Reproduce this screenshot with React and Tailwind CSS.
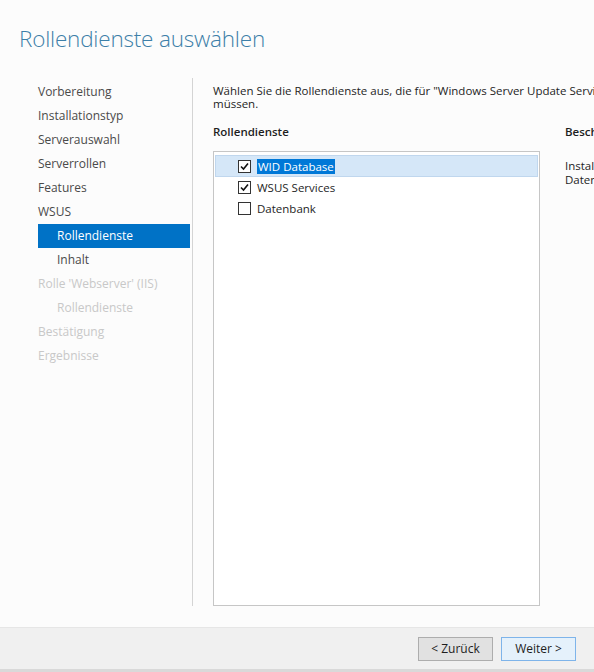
import React from "react";

const font = { fontFamily: '"Open Sans", "Noto Sans", sans-serif' };

function Check({ checked }) {
  return (
    <span className="w-[13px] h-[13px] border border-[#333] bg-white flex items-center justify-center shrink-0">
      {checked && (
        <svg width="9" height="9" viewBox="0 0 9 9">
          <path d="M1 4.5 L3.5 7 L8 1.5" stroke="#111" strokeWidth="1.6" fill="none" />
        </svg>
      )}
    </span>
  );
}

const nav = [
  { t: "Vorbereitung", s: "n" },
  { t: "Installationstyp", s: "n" },
  { t: "Serverauswahl", s: "n" },
  { t: "Serverrollen", s: "n" },
  { t: "Features", s: "n" },
  { t: "WSUS", s: "n" },
  { t: "Rollendienste", s: "a", i: true },
  { t: "Inhalt", s: "n", i: true },
  { t: "Rolle 'Webserver' (IIS)", s: "d" },
  { t: "Rollendienste", s: "d", i: true },
  { t: "Bestätigung", s: "d" },
  { t: "Ergebnisse", s: "d" },
];

export default function App() {
  return (
    <div className="w-[594px] h-[672px] bg-[#fcfcfc] flex flex-col overflow-hidden text-[#1e1e1e]" style={font}>
      <div className="h-[627px] flex flex-col">
        <div className="pl-[19px] pt-[23px] h-[78px] text-[22.5px] font-light text-[#3d7fa8] leading-[32px] tracking-[-0.2px]">
          Rollendienste auswählen
        </div>
        <div className="flex flex-1 min-h-0">
          <div className="w-[154px] ml-[38px] pt-[2px] mb-[21px] flex flex-col">
            {nav.map((n, k) => (
              <div
                key={k}
                className={
                  "h-[24px] leading-[24px] text-[12px] whitespace-nowrap " +
                  (n.i ? "pl-[19px] " : "") +
                  (n.s === "a"
                    ? "bg-[#0072c6] text-white mr-[2px]"
                    : n.s === "d"
                    ? "text-[#c8c8c8]"
                    : "text-[#4a4a4a]")
                }
              >
                {n.t}
              </div>
            ))}
          </div>
          <div className="w-px bg-[#d4d4d4] mb-[21px]" />
          <div className="flex-1 pl-[20px] pt-[6px] min-w-0 overflow-hidden text-[11.5px]">
            <div className="leading-[13px] whitespace-nowrap text-[#1e1e1e]">
              Wählen Sie die Rollendienste aus, die für "Windows Server Update Services" installiert werden
              <br />
              müssen.
            </div>
            <div className="flex mt-[14px]">
              <div className="w-[327px] shrink-0">
                <div className="font-semibold leading-[16px] mb-[11px]">Rollendienste</div>
                <div className="h-[455px] border border-[#c6c6c6] bg-white pt-[3px] px-[1px]">
                  <div className="h-[22px] bg-[#d5e7f8] border border-[#c0d7ee] flex items-center pl-[22px] gap-[6px]">
                    <Check checked />
                    <span className="bg-[#0078d7] text-white px-[1px] leading-[15px]">WID Database</span>
                  </div>
                  <div className="h-[21px] flex items-center pl-[23px] gap-[6px]">
                    <Check checked />
                    <span>WSUS Services</span>
                  </div>
                  <div className="h-[21px] flex items-center pl-[23px] gap-[6px]">
                    <Check />
                    <span>Datenbank</span>
                  </div>
                </div>
              </div>
              <div className="pl-[25px] whitespace-nowrap">
                <div className="font-semibold leading-[16px] mb-[11px]">Beschreibung</div>
                <div className="leading-[14px] pt-[8px]">
                  Installiert die von WSUS verwendete
                  <br />
                  Datenbank in WID.
                </div>
              </div>
            </div>
          </div>
        </div>
      </div>
      <div className="flex-1 bg-[#f0f0f0] border-t border-[#e6e6e6] flex justify-end items-start pt-[9px] pr-[18px] gap-[8px] text-[12px] border-b-[3px] border-b-[#d9d9d9]">
        <button className="w-[75px] h-[24px] bg-[#e1e1e1] border border-[#adadad] text-[#1e1e1e]">&lt; Zurück</button>
        <button className="w-[75px] h-[24px] bg-[#e5f1fb] border border-[#7eb4ea] text-[#1e1e1e]">Weiter &gt;</button>
      </div>
    </div>
  );
}
